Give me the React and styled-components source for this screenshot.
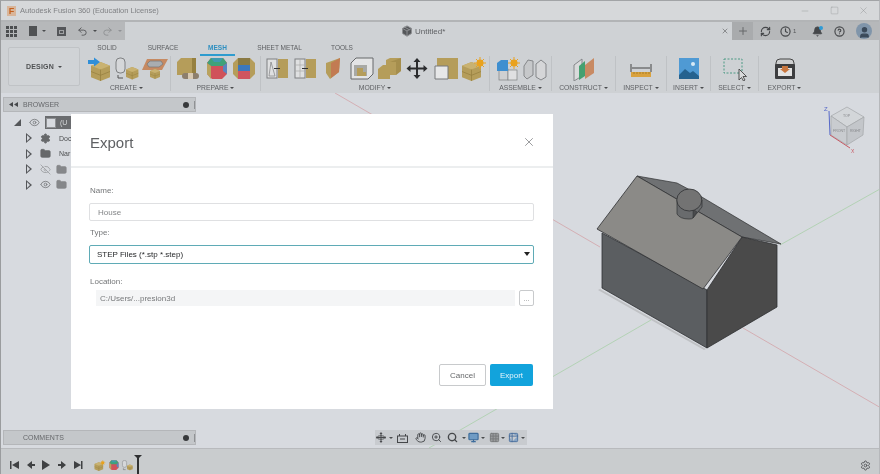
import styled, { createGlobalStyle } from "styled-components";
import { Hand, Search, ZoomIn, Monitor, Grid3x3, Table2, Plus, X, Minus, Square, Undo2, Redo2, Settings, HelpCircle, Bell, RefreshCw, Clock, Eye, EyeOff, Folder, Package, User } from "lucide-react";

const GlobalStyle = createGlobalStyle`
  html, body {
    margin: 0;
    padding: 0;
    background: #d7dadf;
  }
  * {
    box-sizing: border-box;
  }
`;

const TAN = "#b59d5a";
const TAN_DARK = "#96803f";
const TAN_LIGHT = "#c9b271";
const LINE = "#7e8082";

function Block({ x = 0, y = 0, s = 1 }) {
  return (
    <g transform={`translate(${x} ${y}) scale(${s})`}>
      <polygon points="0,4 10,0 20,4 20,16 10,20 0,16" fill={TAN} />
      <polygon points="0,4 10,8 20,4 10,0" fill={TAN_LIGHT} />
      <polyline points="0,10 10,14 20,10" fill="none" stroke={TAN_DARK} strokeWidth="0.8" />
      <line x1="10" y1="8" x2="10" y2="20" stroke={TAN_DARK} strokeWidth="0.8" />
    </g>
  );
}

const tools = {
  extrude: (
    <>
      <Block x={6} y={5} s={0.95} />
      <polygon points="3,3 9,3 9,0.5 15,5 9,9.5 9,7 3,7" fill="#2f8fd8" />
    </>
  ),
  cylinder: (
    <>
      <rect x="3" y="1" width="9" height="15" rx="4" fill="#d5d7d9" stroke={LINE} />
      <Block x={13} y={10} s={0.62} />
      <path d="M5 18v3h5" fill="none" stroke="#555" strokeWidth="1" />
    </>
  ),
  plane: (
    <>
      <polygon points="6,2 27,2 21,13 1,13" fill="#c68a62" />
      <polygon points="9,4 20,4 22,7 18,10 8,10 6,7" fill="#a9adb0" stroke="#777" strokeWidth="0.7" />
      <Block x={9} y={12} s={0.5} />
    </>
  ),
  cube: (
    <>
      <polygon points="3,5 7,1 22,1 22,18 3,18" fill={TAN} />
      <polygon points="18,1 22,1 22,18 18,18" fill={TAN_DARK} />
      <rect x="8" y="16" width="17" height="6" rx="3" fill="#8d7f6d" />
      <rect x="14" y="16" width="5" height="6" fill="#d8c9b2" />
    </>
  ),
  colored: (
    <>
      <polygon points="5,6 9,1 21,1 25,6 25,17 20,22 10,22 5,17" fill="#d0525a" />
      <polygon points="5,6 9,1 21,1 25,6 21,9 9,9" fill="#3fa279" />
      <polygon points="9,1 21,1 18,5 12,5" fill="#3f9bb0" />
      <polygon points="5,6 9,9 9,22 5,17" fill="#b9a35e" />
      <polygon points="21,9 25,6 25,17 21,14" fill="#5b84bf" />
    </>
  ),
  mixed: (
    <>
      <polygon points="3,6 8,1 20,1 25,6 25,17 20,22 8,22 3,17" fill={TAN} />
      <polygon points="8,8 20,8 20,14 8,14" fill="#3c78bd" />
      <polygon points="8,14 20,14 20,22 8,22" fill="#cf5560" />
      <polygon points="8,1 20,1 20,8 8,8" fill="#8a7a43" />
    </>
  ),
  split: (
    <>
      <rect x="4" y="2" width="10" height="19" fill="#dfe0e1" stroke={LINE} />
      <rect x="15" y="2" width="10" height="19" fill={TAN} />
      <path d="M8 5 6 19h6Z" fill="none" stroke={LINE} strokeWidth="0.7" />
      <line x1="11" y1="11.500" x2="17" y2="11.500" stroke="#333" strokeWidth="1" />
    </>
  ),
  splitGrid: (
    <>
      <rect x="4" y="2" width="10" height="19" fill="#dfe0e1" stroke={LINE} />
      <path d="M4 8h10M4 14h10M9 2v19" stroke="#aaa" strokeWidth="0.7" />
      <rect x="15" y="2" width="10" height="19" fill={TAN} />
      <line x1="11" y1="11.500" x2="17" y2="11.500" stroke="#333" strokeWidth="1" />
    </>
  ),
  shard: (
    <>
      <polygon points="7,6 21,1 20,15 11,22 7,16" fill={TAN} />
      <polygon points="12,6 21,1 20,15 12,21" fill="#c27b52" />
    </>
  ),
  shell: (
    <>
      <polygon points="4,6 9,1 26,1 26,17 21,22 4,22" fill="#e3e4e5" stroke="#66686a" />
      <polygon points="7,8 20,8 20,19 7,19" fill="#a8a9a5" />
      <polygon points="10,11 16,11 16,15 19,15 19,19 10,19" fill={TAN} />
    </>
  ),
  combine: (
    <>
      <polygon points="3,12 8,8 11,8 11,3 15,1 26,1 26,14 21,18 15,18 15,22 3,22" fill={TAN} />
      <polygon points="15,5 26,1 26,14 21,18 21,5" fill={TAN_DARK} opacity="0.5" />
    </>
  ),
  move: (
    <path d="M14 1l3.500 4H15v5.500h5.500V8l4 3.500-4 3.500v-2.500H15V18h2.500L14 22l-3.500-4H13v-5.500H7.500V15l-4-3.500 4-3.500v2.500H13V5h-2.500Z" fill="#2b2c2e" />
  ),
  fillet: (
    <>
      <rect x="6" y="1" width="21" height="21" fill={TAN} />
      <path d="M4 9h13v13H4Z" fill="#e6e7e8" stroke="#77797b" />
    </>
  ),
  formSun: (
    <>
      <Block x={3} y={5} s={0.95} />
      <circle cx="21" cy="6" r="3.500" fill="#e9a21f" />
      <path d="M21 0v12M15 6h12M17 2l8 8M25 2l-8 8" stroke="#e9a21f" strokeWidth="1" />
    </>
  ),
  joint: (
    <>
      <rect x="6" y="12" width="9" height="11" fill="#cfd0d1" stroke={LINE} strokeWidth="0.7" />
      <rect x="15" y="13" width="9" height="10" fill="#dfe0e1" stroke={LINE} strokeWidth="0.7" />
      <polygon points="4,6 8,3 15,3 15,14 4,14" fill="#3e8fd0" />
      <circle cx="21" cy="6" r="3.500" fill="#e9a21f" />
      <path d="M21 0v12M15 6h12M17 2l8 8M25 2l-8 8" stroke="#e9a21f" strokeWidth="1" />
    </>
  ),
  asBuilt: (
    <>
      <path d="M3 9l4-6 5 1v14l-6 4-3-3Z" fill="#c6c8ca" stroke="#85878a" />
      <path d="M25 7l-5-4-5 4v13l5 3 5-3Z" fill="#d5d6d8" stroke="#85878a" />
    </>
  ),
  planes: (
    <>
      <path d="M4 8l8-6v17l-8 5Z" fill="#d9dadb" stroke="#85878a" />
      <polygon points="9,9 15,4 15,19 9,23" fill="#45a070" />
      <polygon points="15,8 24,1 24,16 15,22" fill="#c88a63" />
    </>
  ),
  ruler: (
    <>
      <path d="M4 7v8M24 7v8M5 11h18" stroke="#444" strokeWidth="1" fill="none" />
      <rect x="4" y="15" width="20" height="5" fill="#d9a23e" />
      <path d="M7 15v2M10 15v2M13 15v2M16 15v2M19 15v2M22 15v2" stroke="#96701c" strokeWidth="0.7" />
    </>
  ),
  image: (
    <>
      <rect x="4" y="1" width="20" height="21" fill="#4f9ad4" />
      <circle cx="18" cy="7" r="2" fill="#d7eaf6" />
      <path d="M4 18l6-6 5 4 3-2 6 5v3H4Z" fill="#25628f" />
    </>
  ),
  select: (
    <>
      <rect x="3" y="2" width="18" height="14" fill="none" stroke="#4c9a84" strokeWidth="1" strokeDasharray="2 1.500" />
      <path d="M18 12v11l2.500-2.500 2 3.500 1.500-1-2-3.500h3.500Z" fill="#d9dadb" stroke="#444" strokeWidth="0.9" />
    </>
  ),
  exportBox: (
    <>
      <path d="M5 6q0-4 4-4h10q4 0 4 4v3H5Z" fill="#cfd0d1" stroke="#444" strokeWidth="1" />
      <rect x="4" y="7" width="20" height="15" fill="#3d3e40" rx="1" />
      <rect x="7" y="11" width="14" height="8" fill="#e3e3e3" />
      <polygon points="11,9 17,9 17,12 19,12 14,16 9,12 11,12" fill="#c9773f" />
    </>
  ),
};

const ribbon = [
  { label: "CREATE", width: 83, pad: 5, icons: ["extrude", "cylinder", "plane"] },
  { label: "PREPARE", width: 90, icons: ["cube", "colored", "mixed"] },
  { label: "MODIFY", width: 229, icons: ["split", "splitGrid", "shard", "shell", "combine", "move", "fillet", "formSun"] },
  { label: "ASSEMBLE", width: 62, icons: ["joint", "asBuilt"] },
  { label: "CONSTRUCT", width: 64, icons: ["planes"] },
  { label: "INSPECT", width: 51, icons: ["ruler"] },
  { label: "INSERT", width: 44, icons: ["image"] },
  { label: "SELECT", width: 48, icons: ["select"] },
  { label: "EXPORT", width: 51, last: true, icons: ["exportBox"] },
];

const tabs = [
  { name: "SOLID", width: 38 },
  { name: "SURFACE", width: 74 },
  { name: "MESH", width: 35, active: true },
  { name: "SHEET METAL", width: 89 },
  { name: "TOOLS", width: 36 },
];

const navItems = [
  { left: 1, node: <OrbitIcon /> },
  { left: 3, node: <NavCaret /> },
  { left: 4, node: <LookAtIcon /> },
  { left: 7, node: <Hand size={11} color="#45474a" /> },
  { left: 5, node: <ZoomIn size={11} color="#45474a" /> },
  { left: 5, node: <Search size={11} color="#45474a" strokeWidth={3} /> },
  { left: 3.500, node: <NavCaret /> },
  { left: 2.500, node: <Monitor size={11} color="#3d6c9c" fill="#6f9bc4" strokeWidth={2.500} /> },
  { left: 1.500, node: <NavCaret /> },
  { left: 4.500, node: <Grid3x3 size={11} color="#77797b" fill="#9a9c9e" /> },
  { left: 0.500, node: <NavCaret /> },
  { left: 3.500, node: <Table2 size={11} color="#4a6f9c" fill="#87a5c6" /> },
  { left: 1.500, node: <NavCaret /> },
];

function OrbitIcon() {
  return (
    <svg width="10" height="11" viewBox="0 0 10 11" fill="#45474a">
      <path d="M5 0l1.500 2H5.500v3H9V4l1 1.500L9 7V6H5.500v3h1L5 11 3.500 9h1V6H1v1L0 5.500 1 4v1h3.500V2h-1Z" />
      <ellipse cx="5" cy="5.500" rx="4" ry="1.800" fill="none" stroke="#45474a" strokeWidth="0.8" />
    </svg>
  );
}

function LookAtIcon() {
  return (
    <svg width="11" height="10" viewBox="0 0 11 10" fill="none" stroke="#45474a" strokeWidth="1">
      <rect x="0.500" y="3" width="10" height="6.500" />
      <path d="M2.500 3V1M8.500 3V1M3 6h5" />
    </svg>
  );
}

function NavCaret() {
  return <Caret />;
}

export default function App() {
  return (
    <Window>
      <GlobalStyle />
      <TitleBar>
        <Logo>F</Logo>
        <TitleText>Autodesk Fusion 360 (Education License)</TitleText>
        <WindowButtons>
          <Minus size={10} strokeWidth={1} />
          <Square size={9} strokeWidth={1} />
          <X size={11} strokeWidth={1} />
        </WindowButtons>
      </TitleBar>

      <QuickRow>
        <QuickLeft>
          <svg width="11" height="11" viewBox="0 0 11 11" fill="#4c4e50">
            {[0, 4, 8].map((x) => [0, 4, 8].map((y) => <rect key={`${x}-${y}`} x={x} y={y} width="3" height="3" />))}
          </svg>
          <DocIcon />
          <Caret />
          <SaveIcon />
          <Undo2 size={11} color="#55575a" strokeWidth={2} />
          <Caret />
          <Redo2 size={11} color="#8d8f92" strokeWidth={2} />
          <Caret $light />
        </QuickLeft>
        <DocTab>
          <Package size={12} fill="#55575a" color="#8d8f92" />
          <span>Untitled*</span>
          <TabClose><X size={8} strokeWidth={2} /></TabClose>
        </DocTab>
        <QuickRight>
          <PlusCell><Plus size={12} strokeWidth={2} color="#66686a" /></PlusCell>
          <RightIcon $left={7}><RefreshCw size={11} strokeWidth={2.500} color="#45474a" /></RightIcon>
          <RightIcon $left={9}><Clock size={11} strokeWidth={2.500} color="#45474a" /><small>1</small></RightIcon>
          <RightIcon $left={16}><Bell size={11} fill="#45474a" color="#45474a" /><BellDot /></RightIcon>
          <RightIcon $left={11}><HelpCircle size={11} strokeWidth={2.500} color="#45474a" /></RightIcon>
          <Avatar><User size={13} fill="#3b4a5a" color="#3b4a5a" /></Avatar>
        </QuickRight>
      </QuickRow>

      <Ribbon>
        <DesignWrap>
          <DesignButton>DESIGN<Caret $dark /></DesignButton>
        </DesignWrap>
        <RibbonMain>
          <TabRow>
            {tabs.map((t) => (
              <Tab key={t.name} $width={t.width} $active={t.active}>{t.name}</Tab>
            ))}
          </TabRow>
          <Groups>
            {ribbon.map((g) => (
              <Group key={g.label} $width={g.width} $pad={g.pad} $last={g.last}>
                <GroupIcons>
                  {g.icons.map((name) => (
                    <ToolIcon key={name} viewBox="0 0 28 24">{tools[name]}</ToolIcon>
                  ))}
                </GroupIcons>
                <GroupLabel>{g.label}<Caret $dark /></GroupLabel>
              </Group>
            ))}
          </Groups>
        </RibbonMain>
      </Ribbon>

      <Viewport>
        <Scene viewBox="0 93 880 355">
          <g fill="none" strokeWidth="0.8">
            <path d="M335 93 600 247M743 328 950 448" stroke="#d3a3a8" />
            <path d="M880 189 780 245M651 320 429 448" stroke="#a9cfa9" />
          </g>
          <polygon points="600,289 706,349 704,350 598,290" fill="#bfc1c4" />
          <polygon points="677,183 690,190 781,244 742,237 637,176" fill="#6f7173" stroke="#2f3032" strokeWidth="0.7" />
          <polygon points="602,233 707,290 707,348 602,288" fill="#5b5e61" stroke="#2f3032" strokeWidth="0.8" />
          <polygon points="707,290 742,237 777,245 777,307 707,348" fill="#4a4a4a" stroke="#2f3032" strokeWidth="0.8" />
          <polygon points="637,176 597,229 703,289 742,237" fill="#8b8a87" stroke="#2f3032" strokeWidth="0.8" />
          <path d="M677 200v14q3 5 12 5 3 0 4-1l9-11v-7Z" fill="#696b6d" stroke="#2f3032" strokeWidth="0.7" />
          <path d="M693 218l0-9 4 3Z" fill="#4a4b4d" stroke="#2f3032" strokeWidth="0.5" />
          <ellipse cx="689.300" cy="200" rx="12.500" ry="11" fill="#737373" stroke="#2f3032" strokeWidth="0.8" />

          <g stroke="#a4a6a9" strokeWidth="0.7">
            <polygon points="847,107 864,117 847,127 831,116" fill="#d3d6d9" />
            <polygon points="831,116 847,127 847,145 831,135" fill="#c9ccd0" />
            <polygon points="847,127 864,117 863,135 847,145" fill="#c3c6ca" />
          </g>
          <path d="M829 111 830 135" stroke="#5668c8" strokeWidth="1" />
          <path d="M830 135 850 148" stroke="#c85a64" strokeWidth="1" />
          <CubeText x="824" y="111" fill="#5668c8" fontSize="6">Z</CubeText>
          <CubeText x="851" y="153" fill="#c85a64" fontSize="5">X</CubeText>
          <CubeText x="843" y="117" fill="#85878a" fontSize="3.500">TOP</CubeText>
          <CubeText x="833" y="132" fill="#85878a" fontSize="3.500">FRONT</CubeText>
          <CubeText x="850" y="132" fill="#85878a" fontSize="3.500">RIGHT</CubeText>
        </Scene>

        <SidePanel>
          <PanelBar>
            <svg width="9" height="5" viewBox="0 0 9 5" fill="#45474a">
              <path d="M4 0v5L0 2.500ZM9 0v5L5 2.500Z" />
            </svg>
            <PanelTitle $indent={5}>BROWSER</PanelTitle>
            <PanelDot />
            <PanelGrip />
          </PanelBar>
          <TreeRow $indent={11}>
            <RootTriangle />
            <Eye size={11} color="#7d7f82" />
            <RootItem><RootBox /><span>(U</span></RootItem>
          </TreeRow>
          <TreeRow>
            <Expand />
            <Settings size={11} fill="#66686a" color="#66686a" />
            <TreeText>Doc</TreeText>
          </TreeRow>
          <TreeRow>
            <Expand />
            <Folder size={11} fill="#66686a" color="#66686a" />
            <TreeText>Nar</TreeText>
          </TreeRow>
          <TreeRow>
            <Expand />
            <EyeOff size={11} color="#a0a2a5" />
            <Folder size={11} fill="#85878a" color="#85878a" />
          </TreeRow>
          <TreeRow>
            <Expand />
            <Eye size={11} color="#7d7f82" />
            <Folder size={11} fill="#85878a" color="#85878a" />
          </TreeRow>
        </SidePanel>

        <CommentsBar>
          <PanelTitle $indent={16}>COMMENTS</PanelTitle>
          <PanelDot />
          <PanelGrip />
        </CommentsBar>

        <NavBar>
          {navItems.map((item, i) => (
            <NavSlot key={i} $left={item.left}>{item.node}</NavSlot>
          ))}
        </NavBar>

        <Dialog>
          <DialogHeader>
            <DialogTitle>Export</DialogTitle>
            <X size={14} strokeWidth={1} color="#55575a" />
          </DialogHeader>
          <DialogBody>
            <FieldLabel>Name:</FieldLabel>
            <TextField>House</TextField>
            <FieldLabel>Type:</FieldLabel>
            <SelectField>
              STEP Files (*.stp *.step)
              <SelectArrow />
            </SelectField>
            <FieldLabel $short>Location:</FieldLabel>
            <LocationRow>
              <LocationPath>C:/Users/...presion3d</LocationPath>
              <BrowseButton>...</BrowseButton>
            </LocationRow>
          </DialogBody>
          <DialogFooter>
            <CancelButton>Cancel</CancelButton>
            <ExportButton>Export</ExportButton>
          </DialogFooter>
        </Dialog>
      </Viewport>

      <Timeline>
        <PlayControls>
          <svg width="76" height="10" viewBox="0 0 76 10" fill="#3f4143">
            <path d="M0 1h1.500v8H0ZM9 1v8L2 5Z" />
            <path d="M22 1v8l-5-4ZM22 4h3v2h-3Z" />
            <path d="M32 0l8 5-8 5Z" />
            <path d="M51 1v8l5-4ZM48 4h3v2h-3Z" />
            <path d="M64 1v8l7-4ZM71 1h1.500v8H71Z" />
          </svg>
        </PlayControls>
        <TimelineIcons>
          <ToolIcon $small viewBox="0 0 28 24">{tools.formSun}</ToolIcon>
          <ToolIcon $small viewBox="0 0 28 24">{tools.colored}</ToolIcon>
          <ToolIcon $small viewBox="0 0 28 24">{tools.cylinder}</ToolIcon>
          <Marker />
        </TimelineIcons>
        <Settings size={11} color="#55575a" />
      </Timeline>
    </Window>
  );
}

const Window = styled.div`
  position: relative;
  width: 880px;
  height: 474px;
  overflow: hidden;
  display: flex;
  flex-direction: column;
  font-family: "Liberation Sans", Arial, sans-serif;
  background: #d7dadf;
  border-top: 1px solid #a2a4a6;
  border-left: 1px solid #9a9c9e;
  border-right: 1px solid #b6b8bb;
  filter: blur(0.35px);
`;

const TitleBar = styled.div`
  height: 21px;
  display: flex;
  align-items: center;
  padding-left: 6px;
  background: #d6d8da;
  border-bottom: 2px solid #b2b4b6;
  flex-shrink: 0;
`;

const Logo = styled.div`
  width: 9px;
  height: 10px;
  margin-right: 4px;
  background: #d8b59a;
  color: #c4611f;
  font-size: 9px;
  line-height: 10px;
  font-weight: 700;
  text-align: center;
`;

const TitleText = styled.div`
  font-size: 7.500px;
  color: #808285;
`;

const WindowButtons = styled.div`
  margin-left: auto;
  width: 69px;
  margin-right: 10px;
  display: flex;
  justify-content: space-between;
  align-items: center;
  color: #8f9194;
`;

const QuickRow = styled.div`
  height: 18px;
  display: flex;
  background: #cfd2d5;
  flex-shrink: 0;
`;

const QuickLeft = styled.div`
  width: 124px;
  padding-left: 5px;
  display: flex;
  align-items: center;
  gap: 5px;
  background: #b6b8ba;
`;

const DocIcon = styled.div`
  width: 8px;
  height: 10px;
  margin-left: 7px;
  background: #505254;
`;

const SaveIcon = styled.div`
  width: 9px;
  height: 9px;
  margin: 0 6px;
  background: #55575a;
  border: 2px solid #55575a;
  border-top-width: 3px;
  box-shadow: inset 0 0 0 1px #a0a2a4;
`;

const Caret = styled.span`
  display: inline-block;
  width: 0;
  height: 0;
  margin-left: ${(p) => (p.$dark ? "2px" : "0")};
  vertical-align: middle;
  border-left: 2px solid transparent;
  border-right: 2px solid transparent;
  border-top: 2.500px solid ${(p) => (p.$light ? "#909295" : "#4a4c4e")};
`;

const DocTab = styled.div`
  flex: 1;
  display: flex;
  align-items: center;
  justify-content: flex-start;
  gap: 2px;
  padding-left: 276px;
  position: relative;
  font-size: 8px;
  color: #5f6164;
`;

const TabClose = styled.span`
  margin-left: auto;
  margin-right: 3px;
  display: flex;
  color: #66686a;
`;

const QuickRight = styled.div`
  width: 147px;
  display: flex;
  align-items: center;
  background: #b6b8ba;
`;

const PlusCell = styled.div`
  width: 21px;
  height: 18px;
  display: flex;
  align-items: center;
  justify-content: center;
  background: #a9abad;
`;

const RightIcon = styled.div`
  position: relative;
  display: flex;
  align-items: center;
  margin-left: ${(p) => p.$left}px;
  small {
    font-size: 6px;
    color: #55575a;
    margin-left: 2px;
  }
`;

const BellDot = styled.span`
  position: absolute;
  top: 0;
  right: 0;
  width: 4px;
  height: 4px;
  border-radius: 50%;
  background: #2f9bd6;
`;

const Avatar = styled.div`
  width: 16px;
  height: 16px;
  margin-left: 11px;
  border-radius: 50%;
  background: #8095aa;
  display: flex;
  align-items: flex-end;
  justify-content: center;
  overflow: hidden;
`;

const Ribbon = styled.div`
  height: 53px;
  display: flex;
  background: #ced1d4;
  flex-shrink: 0;
`;

const DesignWrap = styled.div`
  width: 87px;
  padding: 7px 0 7px 7px;
`;

const DesignButton = styled.div`
  width: 72px;
  height: 39px;
  display: flex;
  align-items: center;
  justify-content: center;
  gap: 2px;
  font-size: 7px;
  font-weight: 700;
  letter-spacing: 0.2px;
  color: #4f5153;
  background: #d0d3d6;
  border: 1px solid #c0c3c6;
  border-radius: 2px;
`;

const RibbonMain = styled.div`
  flex: 1;
  display: flex;
  flex-direction: column;
`;

const TabRow = styled.div`
  height: 16px;
  display: flex;
`;

const Tab = styled.div`
  width: ${(p) => p.$width}px;
  padding-top: 4px;
  height: 16px;
  text-align: center;
  font-size: 6.500px;
  white-space: nowrap;
  color: ${(p) => (p.$active ? "#2e8fc0" : "#5c5e61")};
  font-weight: ${(p) => (p.$active ? 700 : 400)};
  border-bottom: ${(p) => (p.$active ? "2px solid #2e9ccf" : "none")};
`;

const Groups = styled.div`
  flex: 1;
  display: flex;
`;

const Group = styled.div`
  width: ${(p) => p.$width}px;
  padding-right: ${(p) => p.$pad || 0}px;
  display: flex;
  flex-direction: column;
  align-items: center;
  border-right: ${(p) => (p.$last ? "none" : "1px solid #bfc2c5")};
  margin-bottom: 4px;
`;

const GroupIcons = styled.div`
  height: 25px;
  display: flex;
  align-items: center;
`;

const ToolIcon = styled.svg`
  width: ${(p) => (p.$small ? "13px" : "28px")};
  height: ${(p) => (p.$small ? "11px" : "24px")};
  margin-left: ${(p) => (p.$small ? "1px" : "0")};
  flex-shrink: 0;
`;

const GroupLabel = styled.div`
  font-size: 6.800px;
  color: #5f6164;
  white-space: nowrap;
  margin-top: 3px;
`;

const Viewport = styled.div`
  position: relative;
  flex: 1;
  background: #d7dadf;
`;

const Scene = styled.svg`
  position: absolute;
  left: -1px;
  top: 0;
  width: 880px;
  height: 355px;
`;

const CubeText = styled.text`
  font-family: "Liberation Sans", Arial, sans-serif;
`;

const SidePanel = styled.div`
  position: absolute;
  left: 2px;
  top: 4px;
  width: 193px;
`;

const PanelBar = styled.div`
  height: 15px;
  display: flex;
  align-items: center;
  padding-left: 5px;
  background: #c4c7ca;
  border: 1px solid #b4b6b9;
  margin-bottom: 3px;
`;

const PanelTitle = styled.span`
  font-size: 7px;
  color: #66686b;
  margin-left: ${(p) => p.$indent || 0}px;
`;

const PanelDot = styled.span`
  width: 6px;
  height: 6px;
  margin-left: auto;
  border-radius: 50%;
  background: #37393b;
`;

const PanelGrip = styled.span`
  width: 1px;
  height: 8px;
  margin-left: 5px;
  background: #8f9194;
`;

const TreeRow = styled.div`
  height: 15.500px;
  display: flex;
  align-items: center;
  gap: 5px;
  padding-left: ${(p) => p.$indent || 23}px;
`;

const RootTriangle = styled.span`
  width: 0;
  height: 0;
  margin-right: 3px;
  border-left: 7px solid transparent;
  border-bottom: 7px solid #55575a;
`;

const RootItem = styled.div`
  width: 29px;
  height: 13px;
  display: flex;
  align-items: center;
  gap: 4px;
  padding-left: 1px;
  font-size: 7px;
  color: #d8dadc;
  background: #6a6c6f;
`;

const RootBox = styled.span`
  width: 10px;
  height: 10px;
  background: #d7dadf;
  border: 1px solid #8f9194;
`;

const Expand = styled.span`
  position: relative;
  width: 0;
  height: 0;
  margin-right: 3px;
  border-top: 5px solid transparent;
  border-bottom: 5px solid transparent;
  border-left: 6px solid #55575a;
  &::after {
    content: "";
    position: absolute;
    left: -5px;
    top: -3px;
    width: 0;
    height: 0;
    border-top: 3px solid transparent;
    border-bottom: 3px solid transparent;
    border-left: 3.500px solid #d7dadf;
  }
`;

const TreeText = styled.span`
  margin-left: 3px;
  font-size: 7px;
  color: #4c4e50;
`;

const CommentsBar = styled.div`
  position: absolute;
  left: 2px;
  bottom: 3px;
  width: 193px;
  height: 15px;
  display: flex;
  align-items: center;
  padding-left: 3px;
  background: #c4c7ca;
  border: 1px solid #b4b6b9;
`;

const NavBar = styled.div`
  position: absolute;
  left: 374px;
  bottom: 3px;
  width: 152px;
  height: 15px;
  display: flex;
  align-items: center;
  background: #c8cbcf;
`;

const NavSlot = styled.span`
  display: flex;
  align-items: center;
  margin-left: ${(p) => p.$left}px;
`;

const Dialog = styled.div`
  position: absolute;
  left: 70px;
  top: 21px;
  width: 482px;
  height: 295px;
  display: flex;
  flex-direction: column;
  background: #ffffff;
`;

const DialogHeader = styled.div`
  height: 54px;
  padding: 4px 17px 0 19px;
  display: flex;
  align-items: center;
  justify-content: space-between;
  border-bottom: 2px solid #eceeef;
`;

const DialogTitle = styled.div`
  font-size: 15px;
  color: #5f6164;
`;

const DialogBody = styled.div`
  padding: 16px 19px 0 18px;
  display: flex;
  flex-direction: column;
`;

const FieldLabel = styled.label`
  height: ${(p) => (p.$short ? "15px" : "19px")};
  padding: 2px 0 0 1px;
  font-size: 8px;
  color: #747678;
`;

const TextField = styled.div`
  height: 18px;
  margin-bottom: 5px;
  padding-left: 8px;
  display: flex;
  align-items: center;
  font-size: 8px;
  color: #838587;
  border: 1px solid #dfe0e2;
  border-radius: 2px;
`;

const SelectField = styled.div`
  position: relative;
  height: 19px;
  margin-bottom: 11px;
  padding-left: 7px;
  display: flex;
  align-items: center;
  font-size: 8px;
  color: #1f2123;
  border: 1px solid #5fabb6;
  border-radius: 2px;
`;

const SelectArrow = styled.span`
  position: absolute;
  right: 3px;
  top: 6px;
  border-left: 3px solid transparent;
  border-right: 3px solid transparent;
  border-top: 4px solid #222;
`;

const LocationRow = styled.div`
  display: flex;
  gap: 4px;
  padding-left: 7px;
`;

const LocationPath = styled.div`
  flex: 1;
  height: 16px;
  padding-left: 4px;
  display: flex;
  align-items: center;
  font-size: 8px;
  color: #77797b;
  background: #f4f5f6;
`;

const BrowseButton = styled.div`
  width: 15px;
  height: 16px;
  text-align: center;
  font-size: 7px;
  line-height: 15px;
  color: #85878a;
  border: 1px solid #c8cacc;
  border-radius: 2px;
`;

const DialogFooter = styled.div`
  margin-top: auto;
  padding: 0 20px 23px 0;
  display: flex;
  justify-content: flex-end;
  gap: 4px;
`;

const CancelButton = styled.div`
  width: 47px;
  height: 22px;
  display: flex;
  align-items: center;
  justify-content: center;
  font-size: 8px;
  color: #66686a;
  border: 1px solid #c8cacc;
  border-radius: 2px;
`;

const ExportButton = styled.div`
  width: 43px;
  height: 22px;
  display: flex;
  align-items: center;
  justify-content: center;
  font-size: 8px;
  color: #e4f4fb;
  background: #12a3dc;
  border-radius: 2px;
`;

const Timeline = styled.div`
  height: 26px;
  padding: 11px 8px 0 9px;
  display: flex;
  align-items: flex-start;
  background: #c9ccce;
  border-top: 1px solid #b8babd;
  flex-shrink: 0;
`;

const PlayControls = styled.div`
  width: 82px;
  display: flex;
`;

const TimelineIcons = styled.div`
  position: relative;
  flex: 1;
  display: flex;
  align-items: center;
`;

const Marker = styled.span`
  position: absolute;
  left: 45px;
  top: -5px;
  width: 2px;
  height: 20px;
  background: #2f3032;
  &::before {
    content: "";
    position: absolute;
    left: -3px;
    top: 0;
    border-left: 4px solid transparent;
    border-right: 4px solid transparent;
    border-top: 4px solid #2f3032;
  }
`;
